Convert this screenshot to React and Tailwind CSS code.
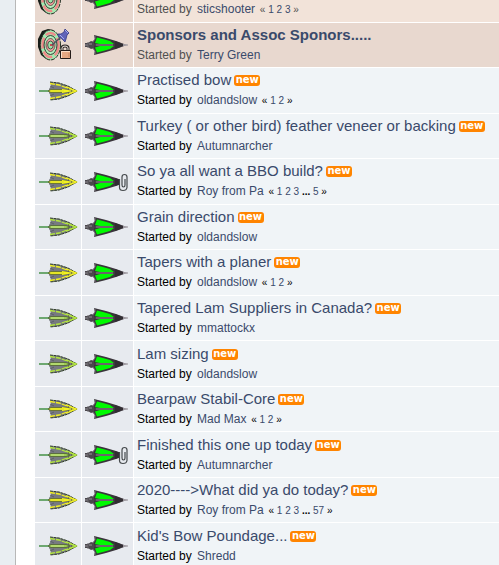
import React from 'react';

const topics = [
  { id: 1, title: 'Practised bow', author: 'oldandslow', pages: ['1', '2'], hot: true },
  { id: 2, title: 'Turkey ( or other bird) feather veneer or backing', author: 'Autumnarcher' },
  { id: 3, title: 'So ya all want a BBO build?', author: 'Roy from Pa', pages: ['1', '2', '3', '...', '5'], hot: true, clip: true },
  { id: 4, title: 'Grain direction', author: 'oldandslow' },
  { id: 5, title: 'Tapers with a planer', author: 'oldandslow', pages: ['1', '2'], hot: true },
  { id: 6, title: 'Tapered Lam Suppliers in Canada?', author: 'mmattockx' },
  { id: 7, title: 'Lam sizing', author: 'oldandslow' },
  { id: 8, title: 'Bearpaw Stabil-Core', author: 'Mad Max', pages: ['1', '2'], hot: true },
  { id: 9, title: 'Finished this one up today', author: 'Autumnarcher', clip: true },
  { id: 10, title: '2020---->What did ya do today?', author: 'Roy from Pa', pages: ['1', '2', '3', '...', '57'], hot: true },
  { id: 11, title: "Kid's Bow Poundage...", author: 'Shredd' },
];

const Broadhead = ({ hot }) => {
  const edge = hot ? '#f4f320' : '#b4e83c';
  return (
    <svg viewBox="0 0 40 20" className="mx-auto block h-5 w-10" aria-hidden="true">
      <path d="M12 1l9 1 9 3 9 5-9 5-9 3-9 1 1-4-2-3V8l2-3z" fill="#777a80" />
      <path d="M12 1l9 1 9 3 9 5-9 5-9 3-9 1" fill="none" stroke="#33402a" strokeDasharray="3 .6" />
      <path d="M12 2.500l9 1.500 8 3M12 17.500l9-1.500 8-3" fill="none" stroke={edge} strokeWidth="1.300" strokeDasharray="5 1" />
      <path d="M28 6l10 4-10 4" fill="none" stroke={edge} strokeWidth="1.600" />
      <path d="M12 5l4 2M12 15l4-2" stroke="#5b6068" />
      <path d="M1 10h10" stroke="#4f8058" strokeWidth="2" />
      <path d="M1 10h10" stroke="#8ccf88" />
      <path d="M10 10l3-1.500h15l4 1.500-4 1.500H13z" fill={hot ? '#eeee25' : '#9ccb52'} stroke="#3c4b22" strokeWidth=".6" />
      {hot && <path d="M24 8l12 2-12 2z" fill="#f4f320" />}
      <path d="M13 10h13" stroke={hot ? '#d5d82a' : '#d3ee97'} strokeWidth=".8" />
      <path d="M30 8h1M33 10h1M30 12h1" stroke="#4a5522" />
    </svg>
  );
};

const GreenHead = ({ clip }) => (
  <svg viewBox="0 0 46 22" className="ml-0.5 block h-[22px] w-[46px]" aria-hidden="true">
    <path d="M10 1l12 3 10 3 8 3v2l-8 3-10 3-12 3 1-4-3-4V9l3-4z" fill="#3a353b" />
    <path d="M11 2v3l-3 4M11 20v-3l-3-4" fill="none" stroke="#77727a" />
    <path d="M36 9.500l8 1v1l-8 1z" fill="#9b969d" />
    <path d="M31 7l8 3v2l-8 3z" fill="#312d32" />
    <path d="M1 9h3l3-2 3 1v6l-3 1-3-2H1z" fill="#4a474c" />
    <path d="M1 11h3M5 10h3" stroke="#97939a" />
    <path d="M4 8v6" stroke="#69666b" />
    <path d="M13 3.500l6 1.500 7 2 4 3H16l-5-1z" fill="#00fa00" />
    <path d="M11 13.500l5-1.500h14l-4 3-7 2-6 1.500z" fill="#00fa00" />
    <path d="M9 11l3-1h17l2 1-2 1H12z" fill="#4d474d" />
    <path d="M12 11h17" stroke="#9b8f9b" strokeWidth=".8" />
    {clip && (
      <g fill="none">
        <path d="M36 3h9v17h-9z" fill="#e7eaef" />
        <path d="M35.500 8v8.500q0 3 3.500 3t4-3V6q0-2.500-2.500-2.500T38 6v8q0 2 1.500 2t1.500-2V8" stroke="#45494c" strokeWidth="1.200" />
      </g>
    )}
  </svg>
);

const Target = ({ locked }) => (
  <svg viewBox="0 0 36 34" className="ml-0.5 block h-[34px] w-9" aria-hidden="true">
    <path d="M5 3l6-2 5 1 4 4 3 8v6l-3 8-5 4-6-1-5-4-3-8V11z" fill="#171d18" />
    <ellipse cx="13.500" cy="17" rx="10" ry="15" fill="#a4eab1" stroke="#293229" strokeDasharray="4 1" />
    <ellipse cx="13.500" cy="17" rx="8" ry="12" fill="none" stroke="#ef8b8b" strokeWidth="2.500" strokeDasharray="11 3" />
    <ellipse cx="13.500" cy="17" rx="6.500" ry="9.500" fill="#b3f0be" stroke="#303c32" />
    <ellipse cx="13.500" cy="17" rx="4.500" ry="6.500" fill="#f0a0a0" stroke="#593639" strokeWidth=".8" />
    <ellipse cx="13.500" cy="17" rx="2.800" ry="4" fill="#9ce3ab" stroke="#2b362d" strokeWidth=".8" />
    <path d="M13 16h3v2h-3z" fill="#c64950" />
    <path d="M15 17l9-8" stroke="#4a5160" strokeWidth="1.300" />
    <path d="M21 6l3 0 3-2 1-3 4 4-2 2-1 4-1 3-3-3-4-3z" fill="#6064b8" stroke="#333985" strokeWidth=".8" />
    <path d="M23 7l4 4M28 2l3 3" stroke="#a7aef0" />
    {locked && (
      <g>
        <path d="M25 22v-2q0-2 3-2t3 2v2" fill="none" stroke="#292221" strokeWidth="3" />
        <path d="M25 22v-2q0-2 3-2t3 2v2" fill="none" stroke="#f5eee8" />
        <path d="M23.500 22.500h10v8h-10z" fill="#e5a782" stroke="#241b18" />
        <path d="M24 23.500h9" stroke="#fbdcc6" />
        <path d="M24.500 24v6" stroke="#fbdcc6" />
        <path d="M32 25v4" stroke="#c98763" />
      </g>
    )}
  </svg>
);

const NewBadge = () => (
  <a href="#new" className="ml-[3px] inline-block h-[11px] w-[26px] rounded-[3px] bg-[#ff8400] text-center align-[2px] font-['DejaVu_Sans',sans-serif] text-[10px] leading-[9px] font-bold text-white">
    new
  </a>
);

const Byline = ({ author, pages }) => (
  <p className="text-xs leading-5">
    Started by <a href="#profile" className="ml-0.5 text-[#3a4a6b]">{author}</a>
    {pages && (
      <small className="ml-0.5 text-[10px]">
        {' « '}
        {pages.map((p) => (
          <React.Fragment key={p}>
            {p === '...' ? <b>...</b> : <a href={`#page-${p}`} className="text-[#3a4a6b]">{p}</a>}{' '}
          </React.Fragment>
        ))}
        »
      </small>
    )}
  </p>
);

const iconCell = 'border-r border-b border-white p-0 align-middle';
const textCell = 'border-b border-white px-[3px] py-0 whitespace-nowrap';

export default function App() {
  return (
    <div className="flex h-screen overflow-hidden bg-[#e9eef2] pl-[15px] font-['Liberation_Sans',Arial,sans-serif] text-black">
      <main className="min-w-0 flex-1 border-l border-[#b8b8b8] bg-white pl-[19px]">
        <table className="-mt-6 w-full table-fixed border-separate border-spacing-0">
          <colgroup>
            <col className="w-[47px]" />
            <col className="w-[52px]" />
            <col />
          </colgroup>
          <tbody className="text-[#505050]">
            <tr className="h-[47px] bg-[#e8d8cf]">
              <td className={iconCell}><Target /></td>
              <td className={iconCell}><GreenHead /></td>
              <td className={`${textCell} bg-[#f2e3d9] pb-0.5 align-bottom`}>
                <Byline author="sticshooter" pages={['1', '2', '3']} />
              </td>
            </tr>
            <tr className="h-[45px] bg-[#e8d8cf]">
              <td className={iconCell}><Target locked /></td>
              <td className={iconCell}><GreenHead /></td>
              <td className={`${textCell} align-middle`}>
                <a href="#topic" className="block text-[15px] leading-5 font-bold text-[#3a4a6b]">Sponsors and Assoc Sponors.....</a>
                <Byline author="Terry Green" />
              </td>
            </tr>
          </tbody>
          <tbody>
            {topics.map((t) => (
              <tr key={t.id} className="h-[45px] bg-[#e7eaef] odd:h-[46px]">
                <td className={iconCell}><Broadhead hot={t.hot} /></td>
                <td className={iconCell}><GreenHead clip={t.clip} /></td>
                <td className={`${textCell} bg-[#f0f4f7] align-middle`}>
                  <div className="text-[15px] leading-5">
                    <a href={`#topic-${t.id}`} className="text-[#3a4a6b]">{t.title}</a>
                    <NewBadge />
                  </div>
                  <Byline author={t.author} pages={t.pages} />
                </td>
              </tr>
            ))}
          </tbody>
        </table>
      </main>
    </div>
  );
}
